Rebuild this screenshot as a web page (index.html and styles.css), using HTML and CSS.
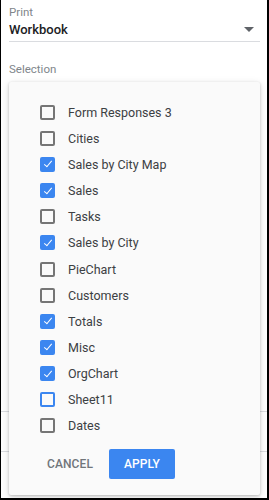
FILE: index.html
```html
<!DOCTYPE html>
<html>
<head>
<meta charset="utf-8">
<link rel="stylesheet" href="styles.css">
</head>
<body>
<div class="frame">
  <div class="form">
    <div class="label">Print</div>
    <div class="select">
      <span>Workbook</span>
      <svg class="caret" width="10" height="5" viewBox="0 0 10 5"><path d="M0 0h10L5 5z" fill="#5f6368"/></svg>
    </div>
    <div class="label sel">Selection</div>
    <div class="field f1"></div>
    <div class="field f2"></div>
  </div>
  <div class="menu">
    <ul class="list">
      <li><span class="cb"></span>Form Responses 3</li>
      <li><span class="cb"></span>Cities</li>
      <li><span class="cb on"></span>Sales by City Map</li>
      <li><span class="cb on"></span>Sales</li>
      <li><span class="cb"></span>Tasks</li>
      <li><span class="cb on"></span>Sales by City</li>
      <li><span class="cb"></span>PieChart</li>
      <li><span class="cb"></span>Customers</li>
      <li><span class="cb on"></span>Totals</li>
      <li><span class="cb on"></span>Misc</li>
      <li><span class="cb on"></span>OrgChart</li>
      <li><span class="cb focus"></span>Sheet11</li>
      <li><span class="cb"></span>Dates</li>
    </ul>
    <div class="actions">
      <button class="btn cancel">CANCEL</button>
      <button class="btn apply">APPLY</button>
    </div>
  </div>
</div>
</body>
</html>
```
FILE: styles.css
```css
* { box-sizing: border-box; }
html, body { margin: 0; padding: 0; background: #fff; }
body { font-family: Roboto, "Noto Sans", sans-serif; }
.frame {
  position: relative;
  width: 269px;
  height: 500px;
  border-left: 1px solid #000;
  border-right: 2px solid #000;
  border-bottom: 2px solid #000;
  overflow: hidden;
}
.form { padding: 5px 7px 0 8px; }
.label { font-size: 11.5px; color: #80868b; line-height: 14px; }
.select {
  display: flex;
  justify-content: space-between;
  align-items: center;
  height: 23px;
  padding: 0 6px 1px 0;
  border-bottom: 1px solid #dadce0;
  font-size: 13px;
  font-weight: 500;
  color: #202124;
}
.sel { margin-top: 20px; }
.field { border-bottom: 1px solid #dadce0; margin: 0 -7px 0 -8px; }
.f1 { margin-top: 335px; }
.f2 { margin-top: 39px; }
.menu {
  position: absolute;
  left: 8px;
  top: 82px;
  width: 251px;
  height: 413px;
  background: #fafafa;
  border-radius: 2px;
  box-shadow: 0 1px 3px rgba(0,0,0,0.22), 0 2px 8px rgba(0,0,0,0.12);
  padding: 17px 0 0 31px;
}
.list { list-style: none; margin: 0; padding: 0; }
.list li {
  display: flex;
  align-items: center;
  height: 26.17px;
  font-size: 12.5px;
  color: #3c4043;
}
.cb {
  width: 15px;
  height: 15px;
  border: 2px solid #757575;
  border-radius: 2px;
  margin-right: 13px;
  flex: none;
  position: relative;
}
.cb.on { background: #3b86f0; border-color: #3b86f0; }
.cb.on::after {
  content: "";
  position: absolute;
  left: 3.5px;
  top: 0.5px;
  width: 3px;
  height: 7px;
  border: solid #fff;
  border-width: 0 1.5px 1.5px 0;
  transform: rotate(40deg);
}
.cb.focus { border-color: #3b86f0; }
.actions {
  display: flex;
  align-items: center;
  gap: 16px;
  margin-top: 10px;
  padding-left: 7px;
}
.btn {
  font-family: Roboto, sans-serif;
  font-size: 12px;
  font-weight: 500;
  border: 0;
  border-radius: 2px;
  cursor: pointer;
  letter-spacing: 0.1px;
}
.cancel { background: transparent; color: #70757a; padding: 0; }
.apply {
  background: #3b86f0;
  color: #fff;
  width: 66px;
  height: 30px;
  padding: 0;
}
```
